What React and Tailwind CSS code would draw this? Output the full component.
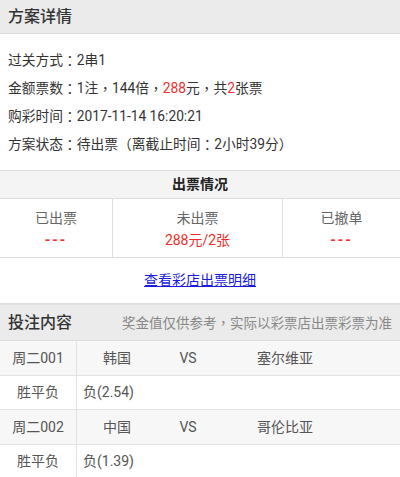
import React from 'react';

// fullwidth punctuation centred in the cell, as on the device
const P = ({ children }) => (
  <span style={{ fontFamily: "'Noto Sans CJK TC', sans-serif" }}>{children}</span>
);

const infoRows = [
  { label: '过关方式', value: <>2串1</> },
  {
    label: '金额票数',
    value: (
      <>
        1注<P>，</P>144倍<P>，</P><span className="text-[#f42c2c]">288</span>元<P>，</P>共<span className="text-[#f42c2c]">2</span>张票
      </>
    ),
  },
  { label: '购彩时间', value: <>2017-11-14 16:20:21</> },
  { label: '方案状态', value: <>待出票（离截止时间<P>：</P>2小时39分）</> },
];

const ticketCols = [
  { label: '已出票', value: '---', w: 'w-[113px]' },
  { label: '未出票', value: '288元/2张', w: 'w-[170px]' },
  { label: '已撤单', value: '---', w: 'flex-1' },
];

const matches = [
  { no: '周二001', home: '韩国', away: '塞尔维亚', play: '胜平负', pick: '负(2.54)' },
  { no: '周二002', home: '中国', away: '哥伦比亚', play: '胜平负', pick: '负(1.39)' },
];

const App = () => {
  return (
    <div
      className="w-[400px] h-[477px] overflow-hidden bg-white text-[#333]"
      style={{ fontFamily: "Roboto, 'Noto Sans CJK SC', sans-serif" }}
    >
      {/* 方案详情 */}
      <div className="h-[34px] bg-[#ebebeb] border-b border-[#dcdcdc] flex items-center px-2">
        <h1 className="text-[16px] font-medium text-[#333]">方案详情</h1>
      </div>
      <div className="h-[136px] pt-[12px]">
        {infoRows.map((row) => (
          <div key={row.label} className="h-[28px] flex items-center px-2 text-[13.75px] text-[#333]">
            {row.label}<P>：</P>{row.value}
          </div>
        ))}
      </div>

      {/* 出票情况 */}
      <div className="h-[29px] bg-[#f4f4f4] border-y border-[#dedede] flex items-center justify-center text-[14px] font-bold text-[#222]">
        出票情况
      </div>
      <div className="h-[59px] flex border-b border-[#dedede]">
        {ticketCols.map((col, i) => (
          <div
            key={col.label}
            className={`${col.w} flex flex-col items-center pt-[8px] ${i < 2 ? 'border-r border-[#dedede]' : ''}`}
          >
            <div className="text-[14px] text-[#666] leading-[22px]">{col.label}</div>
            <div
              className={`text-[14px] text-[#f42c2c] leading-[22px] ${col.value === '---' ? 'tracking-[2px] font-bold' : ''}`}
            >
              {col.value}
            </div>
          </div>
        ))}
      </div>
      <div className="h-[45px] flex items-center justify-center">
        <a className="text-[14px] text-[#1a1adf] underline">查看彩店出票明细</a>
      </div>

      {/* 投注内容 */}
      <div className="h-[38px] bg-[#ebebeb] border-t-[2px] border-[#e0e0e0] border-b border-b-[#dcdcdc] flex items-center justify-between pl-2 pr-[8px]">
        <h2 className="text-[16px] font-medium text-[#333]">投注内容</h2>
        <span className="text-[13.5px] text-[#888]">
          奖金值仅供参考<P>，</P>实际以彩票店出票彩票为准
        </span>
      </div>
      {matches.map((m) => (
        <React.Fragment key={m.no}>
          <div className="h-[35px] flex bg-[#f7f7f7] border-b border-[#e2e2e2] text-[14px] text-[#555]">
            <div className="w-[77px] border-r border-[#e2e2e2] flex items-center justify-center">{m.no}</div>
            <div className="w-[80px] flex items-center justify-center">{m.home}</div>
            <div className="w-[62px] flex items-center justify-center">VS</div>
            <div className="w-[132px] flex items-center justify-center">{m.away}</div>
          </div>
          <div className="h-[34px] flex border-b border-[#e2e2e2] text-[14px] text-[#555]">
            <div className="w-[77px] border-r border-[#e2e2e2] flex items-center justify-center">{m.play}</div>
            <div className="flex items-center pl-[6px]">{m.pick}</div>
          </div>
        </React.Fragment>
      ))}
    </div>
  );
};

export default App;
